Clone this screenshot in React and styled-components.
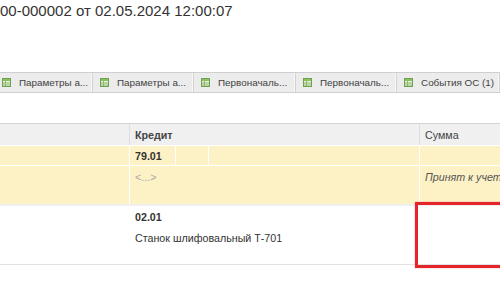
import styled, { createGlobalStyle } from 'styled-components';

const GlobalStyle = createGlobalStyle`
  body {
    margin: 0;
    background: #fff;
    font-family: "Liberation Sans", Arial, sans-serif;
    overflow: hidden;
  }
`

const Page = styled.div`
  width: 500px;
  height: 300px;
  overflow: hidden;
  display: flex;
  flex-direction: column;
`

const Title = styled.h1`
  margin: 0;
  padding-top: 2px;
  font-size: 15px;
  line-height: 18px;
  font-weight: normal;
  color: #333;
  white-space: nowrap;
`

const TabBar = styled.div`
  display: flex;
  margin: 52px 0 0 -5px;
  height: 19px;
  border-top: 1px solid #cfcfcf;
  border-bottom: 1px solid #cfcfcf;
  background: #ececec;
  white-space: nowrap;
`

const Tab = styled.div`
  flex: 0 0 auto;
  width: ${p => p.$w}px;
  display: flex;
  align-items: center;
  gap: 8px;
  padding-left: 7px;
  box-sizing: border-box;
  border-right: 1px solid #d2d2d2;
  box-shadow: inset -1px 0 0 #f8f8f8;
  font-size: 9.9px;
  color: #3f3f3f;
  overflow: hidden;
`

const TableIcon = () => (
  <svg width="9" height="9" viewBox="0 0 9 9">
    <rect x="0.5" y="0.5" width="8" height="8" fill="#e6f2d9" stroke="#6fa050" />
    <rect x="1" y="1" width="7" height="2" fill="#8cc060" />
    <line x1="1" y1="5" x2="8" y2="5" stroke="#8cb870" />
    <line x1="1" y1="7" x2="8" y2="7" stroke="#8cb870" />
    <line x1="3.5" y1="3" x2="3.5" y2="8" stroke="#8cb870" />
  </svg>
)

const Table = styled.div`
  position: relative;
  margin-top: 30px;
  border-top: 1px solid #d4d4d4;
`

const Row = styled.div`
  display: grid;
  grid-template-columns: 129px 290px 1fr;
  height: ${p => p.$h}px;
  background: ${p => p.$bg || '#fff'};
  border-bottom: ${p => p.$line || 'none'};
`

const Cell = styled.div`
  border-left: ${p => (p.$first ? 'none' : `1px solid ${p.$sep || '#fff'}`)};
  padding: ${p => p.$pad || '0 5px'};
  font-size: 10.7px;
  line-height: 14px;
  color: #333;
  display: flex;
  flex-direction: column;
  justify-content: ${p => p.$center ? 'center' : 'flex-start'};
  gap: 7px;
  white-space: nowrap;
  overflow: hidden;
`

const SubCells = styled.div`
  display: grid;
  grid-template-columns: 45px 33px 1fr;
  border-left: 1px solid #fff;
`

const SubCell = styled.div`
  border-left: ${p => (p.$first ? 'none' : '1px solid #fff')};
  padding: 0 5px;
  font-size: 10.7px;
  display: flex;
  align-items: center;
  color: #333;
`

const HeadText = styled.span`
  font-weight: ${p => (p.$bold ? 'bold' : 'normal')};
  color: #444;
`

const Bold = styled.span`
  font-weight: bold;
  color: #333;
`

const Muted = styled.span`
  color: #a8a8a8;
`

const Note = styled.span`
  font-style: italic;
  color: #555;
`

const Highlight = styled.div`
  position: absolute;
  left: 415px;
  top: 78px;
  width: 100px;
  height: 60px;
  border: 3px solid #e6252a;
  box-shadow: 0 0 1px rgba(230, 37, 42, 0.6);
  pointer-events: none;
`

const tabs = [
  { w: 98, label: 'Параметры а...' },
  { w: 101, label: 'Параметры а...' },
  { w: 102, label: 'Первоначаль...' },
  { w: 101, label: 'Первоначаль...' },
  { w: 103, label: 'События ОС (1)' },
  { w: 80, label: '' },
]

export default function App() {
  return (
    <Page>
      <GlobalStyle />
      <Title>00-000002 от 02.05.2024 12:00:07</Title>
      <TabBar>
        {tabs.map((t, i) => (
          <Tab key={i} $w={t.w}>
            {t.label && <TableIcon />}
            {t.label}
          </Tab>
        ))}
      </TabBar>
      <Table>
        <Row $h={21} $bg="#f0f0f0" $line="1px solid #fff">
          <Cell $first $center />
          <Cell $center $sep="#dedede"><HeadText $bold>Кредит</HeadText></Cell>
          <Cell $center $sep="#dedede"><HeadText>Сумма</HeadText></Cell>
        </Row>
        <Row $h={19} $bg="#fdf1c6" $line="1px solid #fff">
          <Cell $first />
          <SubCells>
            <SubCell $first><Bold>79.01</Bold></SubCell>
            <SubCell />
            <SubCell />
          </SubCells>
          <Cell />
        </Row>
        <Row $h={38} $bg="#fdf1c6" $line="2px solid #f0f0f0">
          <Cell $first />
          <Cell $pad="4px 5px 0"><Muted>&lt;...&gt;</Muted></Cell>
          <Cell $pad="4px 5px 0"><Note>Принят к учету</Note></Cell>
        </Row>
        <Row $h={58} $line="1px solid #e2e2e2">
          <Cell $first />
          <Cell $pad="4px 5px 0"><Bold>02.01</Bold><span>Станок шлифовальный Т-701</span></Cell>
          <Cell />
        </Row>
        <Highlight />
      </Table>
    </Page>
  )
}
